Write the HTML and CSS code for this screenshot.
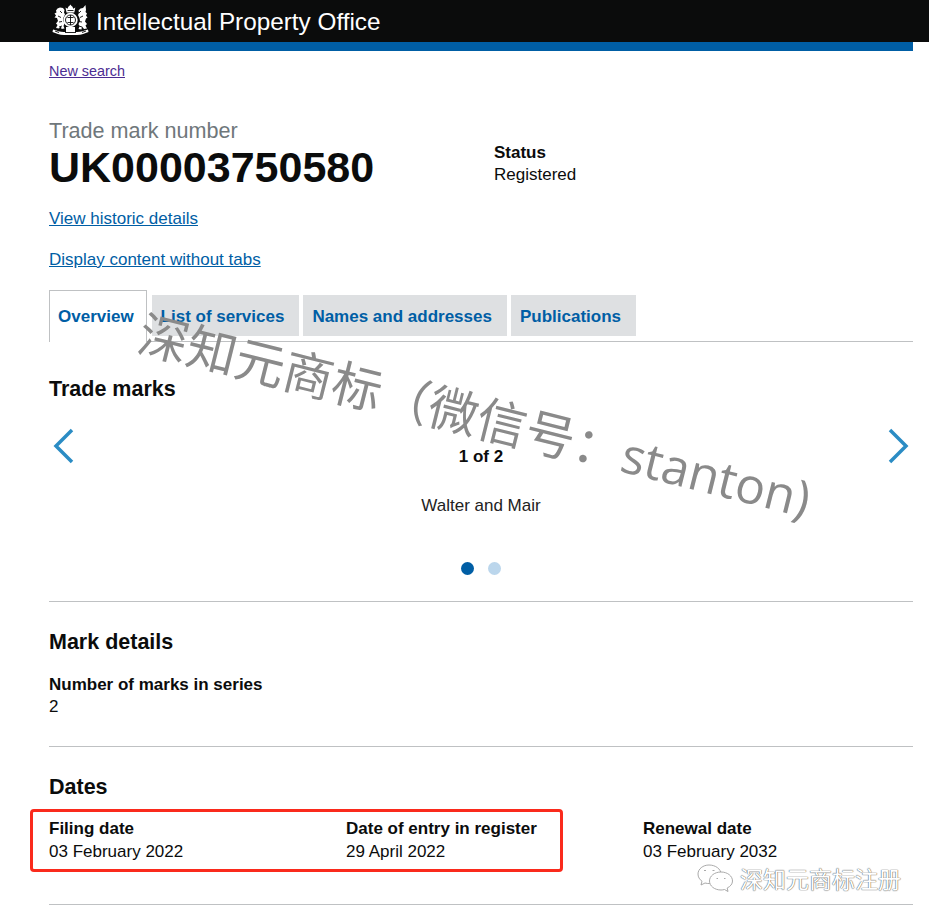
FILE: index.html
```html
<!DOCTYPE html>
<html lang="en">
<head>
<meta charset="utf-8">
<title>Trade mark UK00003750580</title>
<link rel="stylesheet" href="styles.css">
</head>
<body>
<header class="topbar">
  <svg class="crest" width="37" height="32" viewBox="0 0 37 32" aria-hidden="true">
    <g fill="#fff">
      <!-- crown -->
      <path d="M14.500 8.500L13.500 3.500l2 1.200.8-2 1.200-1 .9-1.200.9 1.200 1.200 1 .8 2 2-1.200-1 5z"/>
      <!-- shield ring -->
      <circle cx="18.500" cy="16" r="7.200"/>
      <!-- lion -->
      <path d="M5.500 4.500l2.500-1 3 .5 1.500 2-.5 2.500 1 2-1.500 3-.5 3 1.500 3-1 2.500 1 2.500-3 .5-.5-3-2 2.500-3-.5 1.500-3-1.500-1.500 2-2.500-1-3-2.500-.5 1.500-2-1.500-2 2-1-.5-2z"/>
      <!-- unicorn -->
      <path d="M33.500 1l-2.500 3-2.500.5-2 2 .5 2.500-1 2 1.500 3 .5 3-1.500 3 1 2.500-1 2.500 3 .5.500-3 2 2.500 3-.5-1.500-3 1.500-1.500-2-2.500 1-3 1.500-1-1.500-2 1-2-1.500-1.500.5-2z"/>
      <!-- motto ribbon -->
      <path d="M1 25.500c4 1 7 2.500 11 2.500h13c4 0 7-1.500 11-2.500l.5 2.500c-3.500 1.200-7 3-11.500 3h-13c-4.500 0-8-1.800-11.500-3z"/>
      <rect x="14" y="23" width="9" height="8"/>
    </g>
    <g fill="none" stroke="#0b0c0c" stroke-width=".9">
      <circle cx="18.500" cy="16" r="5"/>
      <path d="M15.500 13.500h6M15.500 18.500h6M18.500 11v10M15.500 6.500h6M8 7l2 2M6 12l3 1.500M7 18l3-.5M7 23l3-1M29 7l-2 2M31 12l-3 1.500M30 18l-3-.5M30 23l-3-1M3 27l4 1.500M34 27l-4 1.500M13 28.500h11"/>
    </g>
  </svg>
  <span class="org">Intellectual Property Office</span>
</header>
<main class="page">
  <div class="bluebar"></div>
  <a class="newsearch" href="#">New search</a>

  <div class="summary">
    <div class="number-block">
      <div class="caption">Trade mark number</div>
      <h1 class="number">UK00003750580</h1>
    </div>
    <div class="status">
      <div class="label">Status</div>
      <div class="value">Registered</div>
    </div>
  </div>

  <p class="linkrow first"><a href="#">View historic details</a></p>
  <p class="linkrow"><a href="#">Display content without tabs</a></p>

  <nav class="tabs">
    <a class="tab active" href="#">Overview</a>
    <a class="tab" href="#">List of services</a>
    <a class="tab" href="#">Names and addresses</a>
    <a class="tab" href="#">Publications</a>
  </nav>

  <section class="carousel-section">
    <h2 class="heading">Trade marks</h2>
    <div class="carousel">
      <svg class="arrow" width="24" height="36" viewBox="0 0 24 36" aria-hidden="true"><path d="M20 2L4 18l16 16" fill="none" stroke="#2b8cc4" stroke-width="3.500"/></svg>
      <div class="slide">
        <div class="count">1 of 2</div>
        <div class="markname">Walter and Mair</div>
      </div>
      <svg class="arrow" width="24" height="36" viewBox="0 0 24 36" aria-hidden="true"><path d="M4 2l16 16L4 34" fill="none" stroke="#2b8cc4" stroke-width="3.500"/></svg>
    </div>
    <div class="dots"><span class="dot on"></span><span class="dot"></span></div>
  </section>

  <section class="details">
    <h2 class="heading">Mark details</h2>
    <div class="label">Number of marks in series</div>
    <div class="value">2</div>
  </section>

  <section class="dates">
    <h2 class="heading">Dates</h2>
    <div class="date-grid">
      <div><div class="label">Filing date</div><div class="value">03 February 2022</div></div>
      <div><div class="label">Date of entry in register</div><div class="value">29 April 2022</div></div>
      <div><div class="label">Renewal date</div><div class="value">03 February 2032</div></div>
    </div>
  </section>
</main>

<div class="annotation"></div>
<div class="watermark">深知元商标（微信号：stanton)</div>
<div class="wechat">
  <svg width="37" height="28" viewBox="0 0 37 28" aria-hidden="true">
    <g fill="#fff" stroke="#a0a0a0" stroke-width=".9">
      <path d="M12 1C6 1 1 5 1 10c0 3 1.500 5.500 4 7.200L4 21l4-2c1.500.4 3 .6 4.500.5 6.500-.5 11.500-4.500 11.500-9.500C24 5 18.500 1 12 1z"/>
      <path d="M24 8c-6.500 0-11.500 4-11.500 9s5 9 11.500 9c1.200 0 2.500-.2 3.500-.5L31 27.500 30.200 24c3.300-1.600 5.300-4 5.300-7 0-5-5-9-11.500-9z"/>
    </g>
    <g fill="none" stroke="#a0a0a0" stroke-width=".9"><path d="M7 6.500h2M15.500 6.500h2M19.500 14.500h1.500M27 14.500h1.500"/></g>
  </svg>
  <span class="wechat-name">深知元商标注册</span>
</div>
</body>
</html>
```
FILE: styles.css
```css
* { box-sizing: border-box; }
html, body { margin: 0; padding: 0; }
body {
  position: relative;
  height: 918px;
  overflow: hidden;
  background: #fff;
  color: #0b0c0c;
  font-family: "Liberation Sans", Arial, sans-serif;
  font-size: 17px;
}
a { color: #005ea5; }

.topbar {
  height: 42px;
  background: #0b0c0c;
  display: flex;
  align-items: center;
  padding-left: 52px;
  color: #fff;
}
.crest { margin-right: 7px; flex: none; margin-top: -3px; }
.org { font-size: 24.300px; line-height: 42px; position: relative; top: 1px; }

.page { padding: 0 16px 0 49px; }
.bluebar { height: 9px; background: #005ea5; }
.newsearch {
  display: inline-block;
  margin-top: 12px;
  font-size: 14.400px;
  line-height: 16px;
  color: #4c2c92;
}

.summary { display: flex; margin-top: 38px; }
.number-block { width: 445px; }
.caption { font-size: 21.600px; line-height: 23px; color: #6f777b; }
.number { margin: 0; font-size: 43px; line-height: 50px; font-weight: 700; color: #0b0c0c; }
.status { padding-top: 23px; }
.label { font-size: 17px; line-height: 22px; font-weight: 700; }
.value { font-size: 17px; line-height: 22px; }

.linkrow { margin: 0; font-size: 17px; line-height: 20px; }
.linkrow.first { margin-top: 17px; }
.linkrow + .linkrow { margin-top: 21px; }

.tabs {
  display: flex;
  align-items: flex-end;
  gap: 4px;
  margin-top: 20px;
  height: 52px;
  border-bottom: 1px solid #bfc1c3;
}
.tab {
  display: block;
  height: 41px;
  margin-bottom: 5px;
  padding: 0 15px 0 9px;
  background: #dee0e2;
  font-size: 17px;
  font-weight: 700;
  line-height: 43px;
  text-decoration: none;
  color: #005ea5;
}
.tab.active {
  height: 52px;
  margin-bottom: -1px;
  margin-right: 1px;
  padding: 0 12px 0 8px;
  background: #fff;
  border: 1px solid #bfc1c3;
  border-bottom: 0;
  line-height: 52px;
}

.heading { margin: 0; font-size: 21.500px; line-height: 26px; font-weight: 700; }

.carousel-section { padding-top: 34px; height: 260px; border-bottom: 1px solid #bfc1c3; }
.carousel { display: flex; justify-content: space-between; align-items: flex-start; margin-top: 26px; height: 134px; }
.arrow { flex: none; margin: 0 3px; }
.slide { text-align: center; padding-top: 18px; width: 200px; }
.count { font-size: 17px; line-height: 22px; font-weight: 700; }
.markname { margin-top: 27px; font-size: 17px; line-height: 22px; color: #222; }
.dots { display: flex; justify-content: center; gap: 14px; padding-right: 1px; }
.dot { width: 13px; height: 13px; border-radius: 50%; background: #bbd6ec; }
.dot.on { background: #005ea5; }

.details { padding-top: 27px; height: 145px; border-bottom: 1px solid #bfc1c3; }
.details .heading { margin-bottom: 19px; }

.dates { padding-top: 27px; height: 158px; border-bottom: 1px solid #bfc1c3; }
.dates .heading { margin-bottom: 18px; }
.date-grid { display: grid; grid-template-columns: 297px 297px 1fr; }
.date-grid .value { margin-top: 1px; }

.annotation {
  position: absolute;
  left: 30px;
  top: 809px;
  width: 533px;
  height: 63px;
  border: 3px solid #fa2a1c;
  border-radius: 4px;
}
.watermark {
  position: absolute;
  left: 147px;
  top: 303px;
  font-family: "Open Sans", "Noto Sans CJK SC", sans-serif;
  font-size: 49.800px;
  line-height: 60px;
  font-weight: 400;
  color: #8a8a8a;
  white-space: nowrap;
  transform: rotate(14deg);
  transform-origin: 0 0;
}
.wechat {
  position: absolute;
  left: 697px;
  top: 864px;
  display: flex;
  align-items: center;
  gap: 6px;
}
.wechat-name {
  font-family: "Noto Sans CJK SC", sans-serif;
  font-size: 23px;
  line-height: 28px;
  color: #fff;
  text-shadow: 0 0 1px #555, 0 0 1px #555;
}
```
